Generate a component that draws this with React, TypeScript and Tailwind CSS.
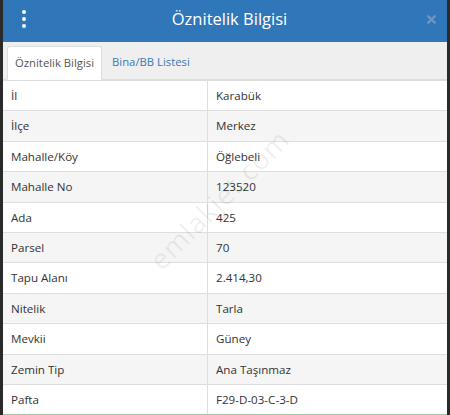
import { X } from 'lucide-react';

const rows: [string, string][] = [
  ['İl', 'Karabük'],
  ['İlçe', 'Merkez'],
  ['Mahalle/Köy', 'Öğlebeli'],
  ['Mahalle No', '123520'],
  ['Ada', '425'],
  ['Parsel', '70'],
  ['Tapu Alanı', '2.414,30'],
  ['Nitelik', 'Tarla'],
  ['Mevkii', 'Güney'],
  ['Zemin Tip', 'Ana Taşınmaz'],
  ['Pafta', 'F29-D-03-C-3-D'],
];

export default function App() {
  return (
    <div
      className="w-[450px] h-[415px] overflow-hidden bg-[#2a2a2a] flex px-[3px]"
      style={{ fontFamily: '"Open Sans", "Noto Sans", sans-serif' }}
    >
      <div className="relative flex-1 flex flex-col bg-white">
        {/* Header */}
        <div className="h-[42px] shrink-0 bg-[#2f77b8] flex items-center pl-[11px] pr-[9px]">
          <div className="w-[20px] flex flex-col items-center gap-[3px] -mt-[4px]">
            <span className="w-[4px] h-[4px] rounded-full bg-white" />
            <span className="w-[4px] h-[4px] rounded-full bg-white" />
            <span className="w-[4px] h-[4px] rounded-full bg-white" />
          </div>
          <h1 className="flex-1 text-center text-white text-[16.5px] leading-none -mt-[3px]">
            Öznitelik Bilgisi
          </h1>
          <X className="w-[13px] h-[13px] text-[#7594bd] -mt-[4px]" strokeWidth={4.5} />
        </div>

        {/* Tabs */}
        <div className="h-[38px] shrink-0 bg-[#efefef] border-b border-[#dddddd] flex items-end pl-[4px]">
          <div className="h-[34px] -mb-px bg-white border border-[#dddddd] border-b-white rounded-t-[3px] px-[7px] flex items-center text-[11.3px] text-[#555555]">
            Öznitelik Bilgisi
          </div>
          <div className="h-[34px] px-[10px] flex items-center text-[11.3px] text-[#3a79b6]">
            Bina/BB Listesi
          </div>
        </div>

        {/* Table */}
        <div className="flex-1 flex flex-col text-[11.6px] text-[#333333]">
          {rows.map(([label, value], i) => (
            <div
              key={label}
              className={`h-[30.4px] flex border-t border-[#dedede] ${i % 2 === 1 ? 'bg-[#f5f5f5]' : 'bg-white'}`}
            >
              <div className="w-[205px] pl-[8px] flex items-center border-r border-[#dedede]">{label}</div>
              <div className="flex-1 pl-[8px] flex items-center">{value}</div>
            </div>
          ))}
          <div className="flex-1 border-t border-[#a9c4a9]" />
        </div>

        {/* Watermark */}
        <div className="absolute left-[124px] top-[178px] -rotate-[45deg] text-[28px] text-[#000000]/[0.07] pointer-events-none select-none tracking-wide">
          emlakjet.com
        </div>
      </div>
    </div>
  );
}
